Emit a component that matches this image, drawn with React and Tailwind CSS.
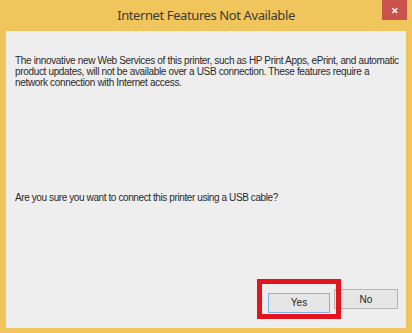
import React from 'react';

// Windows 8 style "Internet Features Not Available" dialog

export default function App() {
  return (
    <div className="w-[412px] h-[333px] bg-[#efc55c] flex flex-col relative overflow-hidden">
      {/* Title bar */}
      <div className="h-[31px] flex items-center justify-center relative">
        <span
          className="text-[13px] tracking-[-0.4px] text-[#3a3a3a] pt-[1px]"
          style={{ fontFamily: '"Noto Sans", "Open Sans", sans-serif' }}
        >
          Internet Features Not Available
        </span>
        <button className="absolute top-0 right-[5px] w-[25px] h-[20px] bg-[#c9524d] flex items-center justify-center text-white text-[9px] font-bold leading-none">
          ✕
        </button>
      </div>

      {/* Content panel */}
      <div
        className="mx-[6px] h-[297px] bg-[#eeeeee] flex flex-col pl-[9px] pr-[4px] pt-[24px] pb-[15px] text-[#2a2a2a]"
        style={{ fontFamily: '"Liberation Sans", Arial, sans-serif' }}
      >
        <p className="text-[10px] leading-[11px] tracking-[-0.34px] whitespace-nowrap">
          The innovative new Web Services of this printer, such as HP Print Apps, ePrint, and automatic
          <br />
          product updates, will not be available over a USB connection. These features require a
          <br />
          network connection with Internet access.
        </p>
        <p className="text-[10px] leading-[11px] tracking-[-0.4px] mt-[104px]">
          Are you sure you want to connect this printer using a USB cable?
        </p>
        <div className="mt-auto flex justify-end gap-[4px] pr-[4px]">
          <div className="relative">
            <button className="w-[62px] h-[20px] border border-[#7fb3e6] bg-[#e6e6e6] text-[10px] text-[#222]">
              Yes
            </button>
            {/* red highlight annotation */}
            <div className="absolute left-[-11px] top-[-10px] w-[84px] h-[40px] border-[5px] border-[#e4141e] pointer-events-none" />
          </div>
          <button className="w-[64px] h-[20px] border border-[#b5b5b5] bg-[#e6e6e6] text-[10px] text-[#222]">
            No
          </button>
        </div>
      </div>
    </div>
  );
}
